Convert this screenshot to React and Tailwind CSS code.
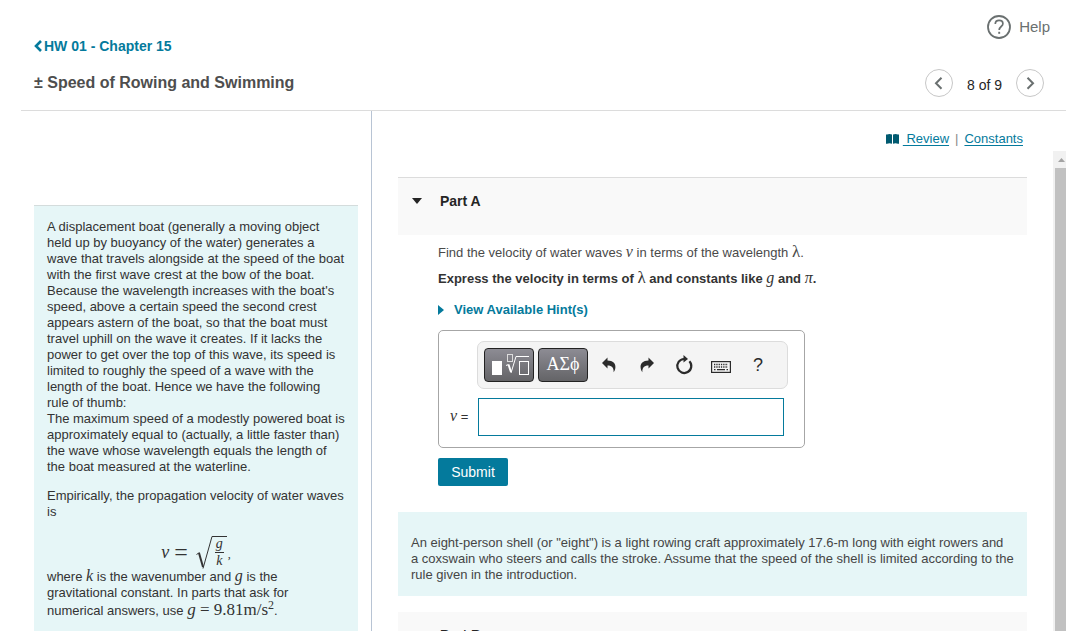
import React from "react";

const V = ({ children, className = "text-[16px]" }) => (
  <i className={`font-['Liberation_Serif',serif] font-normal leading-3 ${className}`}>{children}</i>
);

const Chevron = ({ right }) => (
  <svg width="28" height="28" viewBox="0 0 28 28" fill="none" stroke="#6a7070" strokeWidth="2">
    <path d={right ? "M11.5 8.8 L17 14.3 L11.5 19.8" : "M16.5 8.8 L11 14.3 L16.5 19.8"} />
  </svg>
);

const Arrow = ({ flip }) => (
  <svg width="14" height="16" viewBox="0 0 14 16" fill="#2b2b2b" className={flip ? "-scale-x-100" : ""}>
    <path d="M0 6 L5.5 0.5 V3.5 C11 3.5 13.8 6.5 13.4 10.5 C13.2 12.5 12.6 14 11.6 15.3 C12 11 10 8.5 5.5 8.5 V11.5 Z" />
  </svg>
);

function Header() {
  return (
    <header className="ml-[21px] flex h-[111px] shrink-0 justify-between border-b border-[#dcdcdc] pl-[13px]">
      <div className="flex flex-col pt-[38px]">
        <a href="#hw" className="flex items-center gap-px text-[14px] leading-4 font-bold text-[#047a9c]">
          <svg width="9" height="12" viewBox="0 0 9 12" fill="none" stroke="#047a9c" strokeWidth="2.6">
            <path d="M7 1 L2 6 L7 11" />
          </svg>
          HW 01 - Chapter 15
        </a>
        <h1 className="mt-[19px] text-[16px] leading-5 font-bold text-[#4e4e4e]">± Speed of Rowing and Swimming</h1>
      </div>
      <div className="flex flex-col items-end pt-[15px]">
        <button type="button" className="mr-4 flex items-center gap-2 text-[15px] leading-6 text-[#6a7070]">
          <svg width="24" height="24" viewBox="0 0 24 24" fill="none" stroke="#6a7070">
            <circle cx="12" cy="12" r="11" strokeWidth="1.8" />
            <path d="M8.3 9 C8.3 6.8 9.8 5.4 12.1 5.4 C14.3 5.4 15.9 6.7 15.9 8.7 C15.9 11.5 12.2 11.6 12.2 15" strokeWidth="1.7" />
            <path d="M12.2 16.8 V18.8" strokeWidth="1.9" />
          </svg>
          Help
        </button>
        <nav className="mt-[30px] mr-[22px] flex items-center gap-[14px]">
          <button type="button" aria-label="Previous item" className="size-7 rounded-full outline outline-[#c7c7c7] -outline-offset-1"><Chevron /></button>
          <span className="pt-1 text-[14px] leading-5 text-[#252525]">8 of 9</span>
          <button type="button" aria-label="Next item" className="size-7 rounded-full outline outline-[#c7c7c7] -outline-offset-1"><Chevron right /></button>
        </nav>
      </div>
    </header>
  );
}

function Intro() {
  return (
    <aside className="w-[372px] shrink-0 border-r border-[#b8c4d4] pt-[94px] pr-[13px] pl-[34px]">
      <div className="h-full border-t border-[#d4dcdc] bg-[#e6f6f7] px-[13px] pt-[13px] text-[13px] leading-4 text-[#333]">
        <p>
          A displacement boat (generally a moving object held up by buoyancy of the water) generates a wave that travels
          alongside at the speed of the boat with the first wave crest at the bow of the boat. Because the wavelength
          increases with the boat's speed, above a certain speed the second crest appears astern of the boat, so that
          the boat must travel uphill on the wave it creates. If it lacks the power to get over the top of this wave,
          its speed is limited to roughly the speed of a wave with the length of the boat. Hence we have the following
          rule of thumb:
        </p>
        <p>
          The maximum speed of a modestly powered boat is approximately equal to (actually, a little faster than) the
          wave whose wavelength equals the length of the boat measured at the waterline.
        </p>
        <p className="mt-[13px]">Empirically, the propagation velocity of water waves is</p>
        <div className="mt-[15px] flex h-[34px] items-center justify-center">
          <V className="text-[18px]">v</V>
          <span className="mr-1 ml-[5px] font-['Liberation_Serif',serif] text-[24px] leading-none">=</span>
          <div className="relative ml-1 pl-[19px]">
            <svg className="absolute inset-0" width="31" height="34" viewBox="0 0 31 34" fill="none" stroke="#333">
              <path d="M0.500 19.500 L3.500 17.500" strokeWidth="1" />
              <path d="M3 18 L7 32" strokeWidth="2" />
              <path d="M7 33.500 L16 1.500 H31" strokeWidth="1" />
            </svg>
            <div className="flex h-[34px] w-[9px] flex-col items-center pt-[3px]">
              <V className="text-[14px]">g</V>
              <span className="mt-[2px] mb-[2px] h-px w-full shrink-0 bg-[#333]" />
              <V className="text-[14px]">k</V>
            </div>
          </div>
          <span className="ml-1 pt-1 font-['Liberation_Serif',serif] text-[12px]">,</span>
        </div>
        <p>
          where <V>k</V> is the wavenumber and <V>g</V> is the gravitational constant. In parts
          that ask for numerical answers, use{" "}
          <span className="font-['Liberation_Serif',serif] text-[17px] leading-[18px] whitespace-nowrap">
            <i>g</i> = 9.81m/s<sup className="text-[12px] leading-none">2</sup>
          </span>
          .
        </p>
      </div>
    </aside>
  );
}

function AnswerBox() {
  const dark =
    "flex h-[34px] w-[50px] items-center justify-center rounded-[4px] border border-[#222] bg-linear-to-b from-[#8d8c94] to-[#646467] text-white";
  return (
    <div className="mt-3 w-[367px] rounded-[5px] border border-[#a6a6a6] pt-[10px] pb-[11px] pl-[11px]">
      <div className="ml-[27px] flex h-12 w-[311px] items-center rounded-[7px] border border-[#dcdcdc] bg-[#f4f4f4] pl-[6px]">
        <button type="button" aria-label="Templates" className={dark}>
          <svg className="shrink-0" width="40" height="24" viewBox="0 0 40 24" fill="none" stroke="white">
            <rect x="3" y="8" width="10" height="14" fill="white" stroke="none" />
            <rect x="18.500" y="1.500" width="5" height="7" stroke="#ddd" />
            <path d="M17 12.500 L19.500 11.500" />
            <path d="M19.500 11.500 L22 19" strokeWidth="2" />
            <path d="M22 20 L27 3.500 H40" />
            <rect x="30.500" y="8.500" width="9" height="13" />
          </svg>
        </button>
        <button type="button" aria-label="Symbols" className={`${dark} ml-1 pb-[3px] font-['Liberation_Serif',serif] text-[18px]`}>
          ΑΣϕ
        </button>
        <button type="button" aria-label="Undo" className="ml-[13px] flex w-4 justify-center"><Arrow /></button>
        <button type="button" aria-label="Redo" className="ml-[22px] flex w-4 justify-center"><Arrow flip /></button>
        <button type="button" aria-label="Reset" className="ml-[20px] flex w-[18px] justify-center">
          <svg width="18" height="20" viewBox="0 0 18 20" fill="none" stroke="#2b2b2b" strokeWidth="2.2">
            <path d="M14.400 6.200 A7 7 0 1 1 9 4" />
            <path d="M8.500 0 L13 4 L8.500 7.500 Z" fill="#2b2b2b" stroke="none" />
          </svg>
        </button>
        <button type="button" aria-label="Keyboard" className="ml-[18px] pt-1">
          <svg width="20" height="12" viewBox="0 0 20 12" fill="none" stroke="#2b2b2b">
            <rect x="0.6" y="0.6" width="18.800" height="10.800" strokeWidth="1.2" />
            <path d="M3 3.500 H17 M3 6 H17" strokeWidth="1.3" strokeDasharray="1.300 1" />
            <path d="M3 8.700 H4.500 M6 8.700 H14 M15.500 8.700 H17" strokeWidth="1.300" />
          </svg>
        </button>
        <button type="button" aria-label="Help with input" className="ml-[22px] text-[18px] leading-5 text-[#2b2b2b]">?</button>
      </div>
      <div className="mt-[9px] flex items-center">
        <label htmlFor="answer" className="w-[28px] text-[13px] leading-4 text-[#333]">
          <V>v</V> =
        </label>
        <input id="answer" type="text" className="h-[38px] w-[306px] border border-[#047a9c] bg-white px-2 text-[14px] outline-none" />
      </div>
    </div>
  );
}

function Problem() {
  return (
    <main className="flex min-w-0 flex-1 flex-col">
      <div className="flex h-10 shrink-0 items-center justify-end gap-[6px] pt-4 pr-[43px] text-[13px] leading-4 text-[#888]">
        <a href="#review" className="flex items-center gap-1 text-[#047a9c]">
          <svg width="13" height="10" viewBox="0 0 13 10" fill="#005a70">
            <path d="M0 0.500 H1 Q3.500 -0.300 6 0.500 V9.700 Q3.500 8.900 1 9.700 H0 Z M7 0.500 Q9.500 -0.300 12 0.500 H13 V9.700 H12 Q9.500 8.900 7 9.700 Z" />
          </svg>
          <span className="whitespace-pre underline underline-offset-2"> Review</span>
        </a>
        |
        <a href="#constants" className="text-[#047a9c] underline underline-offset-2">Constants</a>
      </div>
      <div className="flex min-h-0 flex-1">
        <div className="min-w-0 flex-1 overflow-hidden pt-[26px] pr-[26px] pl-[26px]">
          <section>
            <h2 className="border-t border-[#dcdcdc] bg-[#f9f9f9]">
              <button type="button" className="flex h-[57px] w-full items-start pt-[15px] pl-[14px] text-[14px] leading-4 font-bold text-[#252525]">
                <svg className="mt-[5px] mr-[18px]" width="10" height="6" viewBox="0 0 10 6" fill="#252525"><path d="M0 0 H10 L5 6 Z" /></svg>
                Part A
              </button>
            </h2>
            <div className="pt-[10px] pl-10 text-[13px] leading-4 text-[#4a4a4a]">
              <p>Find the velocity of water waves <V>v</V> in terms of the wavelength <V className="text-[17px] not-italic">λ</V>.</p>
              <p className="mt-[10px] font-bold text-[#333]">
                Express the velocity in terms of <V className="text-[17px] not-italic">λ</V> and constants like <V>g</V> and <V>π</V>.
              </p>
              <button type="button" className="mt-[15px] flex items-center gap-[10px] font-bold text-[#047a9c]">
                <svg width="6" height="10" viewBox="0 0 6 10" fill="#047a9c"><path d="M0 0 L6 5 L0 10 Z" /></svg>
                View Available Hint(s)
              </button>
              <AnswerBox />
              <button type="button" className="mt-[10px] h-7 w-[70px] rounded-[2px] bg-[#047a9c] text-[14px] text-white">Submit</button>
            </div>
          </section>
          <p className="mt-[26px] bg-[#e6f6f7] px-[13px] pt-[23px] pb-[13px] text-[13px] leading-4 text-[#454545]">
            An eight-person shell (or "eight") is a light rowing craft approximately 17.6-m long with eight rowers and a
            coxswain who steers and calls the stroke. Assume that the speed of the shell is limited according to the
            rule given in the introduction.
          </p>
          <h2 className="mt-4 bg-[#f9f9f9]">
            <button type="button" className="flex h-[57px] w-full items-start pt-[15px] pl-[42px] text-[14px] leading-4 font-bold text-[#252525]">
              Part B
            </button>
          </h2>
        </div>
        <div className="flex w-[13px] shrink-0 flex-col bg-[#f1f1f1]">
          <svg className="shrink-0" width="13" height="17" viewBox="0 0 13 17" fill="#a3a3a3"><path d="M5 11 L8.500 7 L12 11 Z" /></svg>
          <div className="ml-[2px] flex-1 bg-[#c1c1c1]" />
        </div>
      </div>
    </main>
  );
}

export default function App() {
  return (
    <div className="flex h-screen flex-col overflow-hidden bg-white font-['Liberation_Sans',Arial,sans-serif]">
      <Header />
      <div className="flex min-h-0 flex-1">
        <Intro />
        <Problem />
      </div>
    </div>
  );
}
